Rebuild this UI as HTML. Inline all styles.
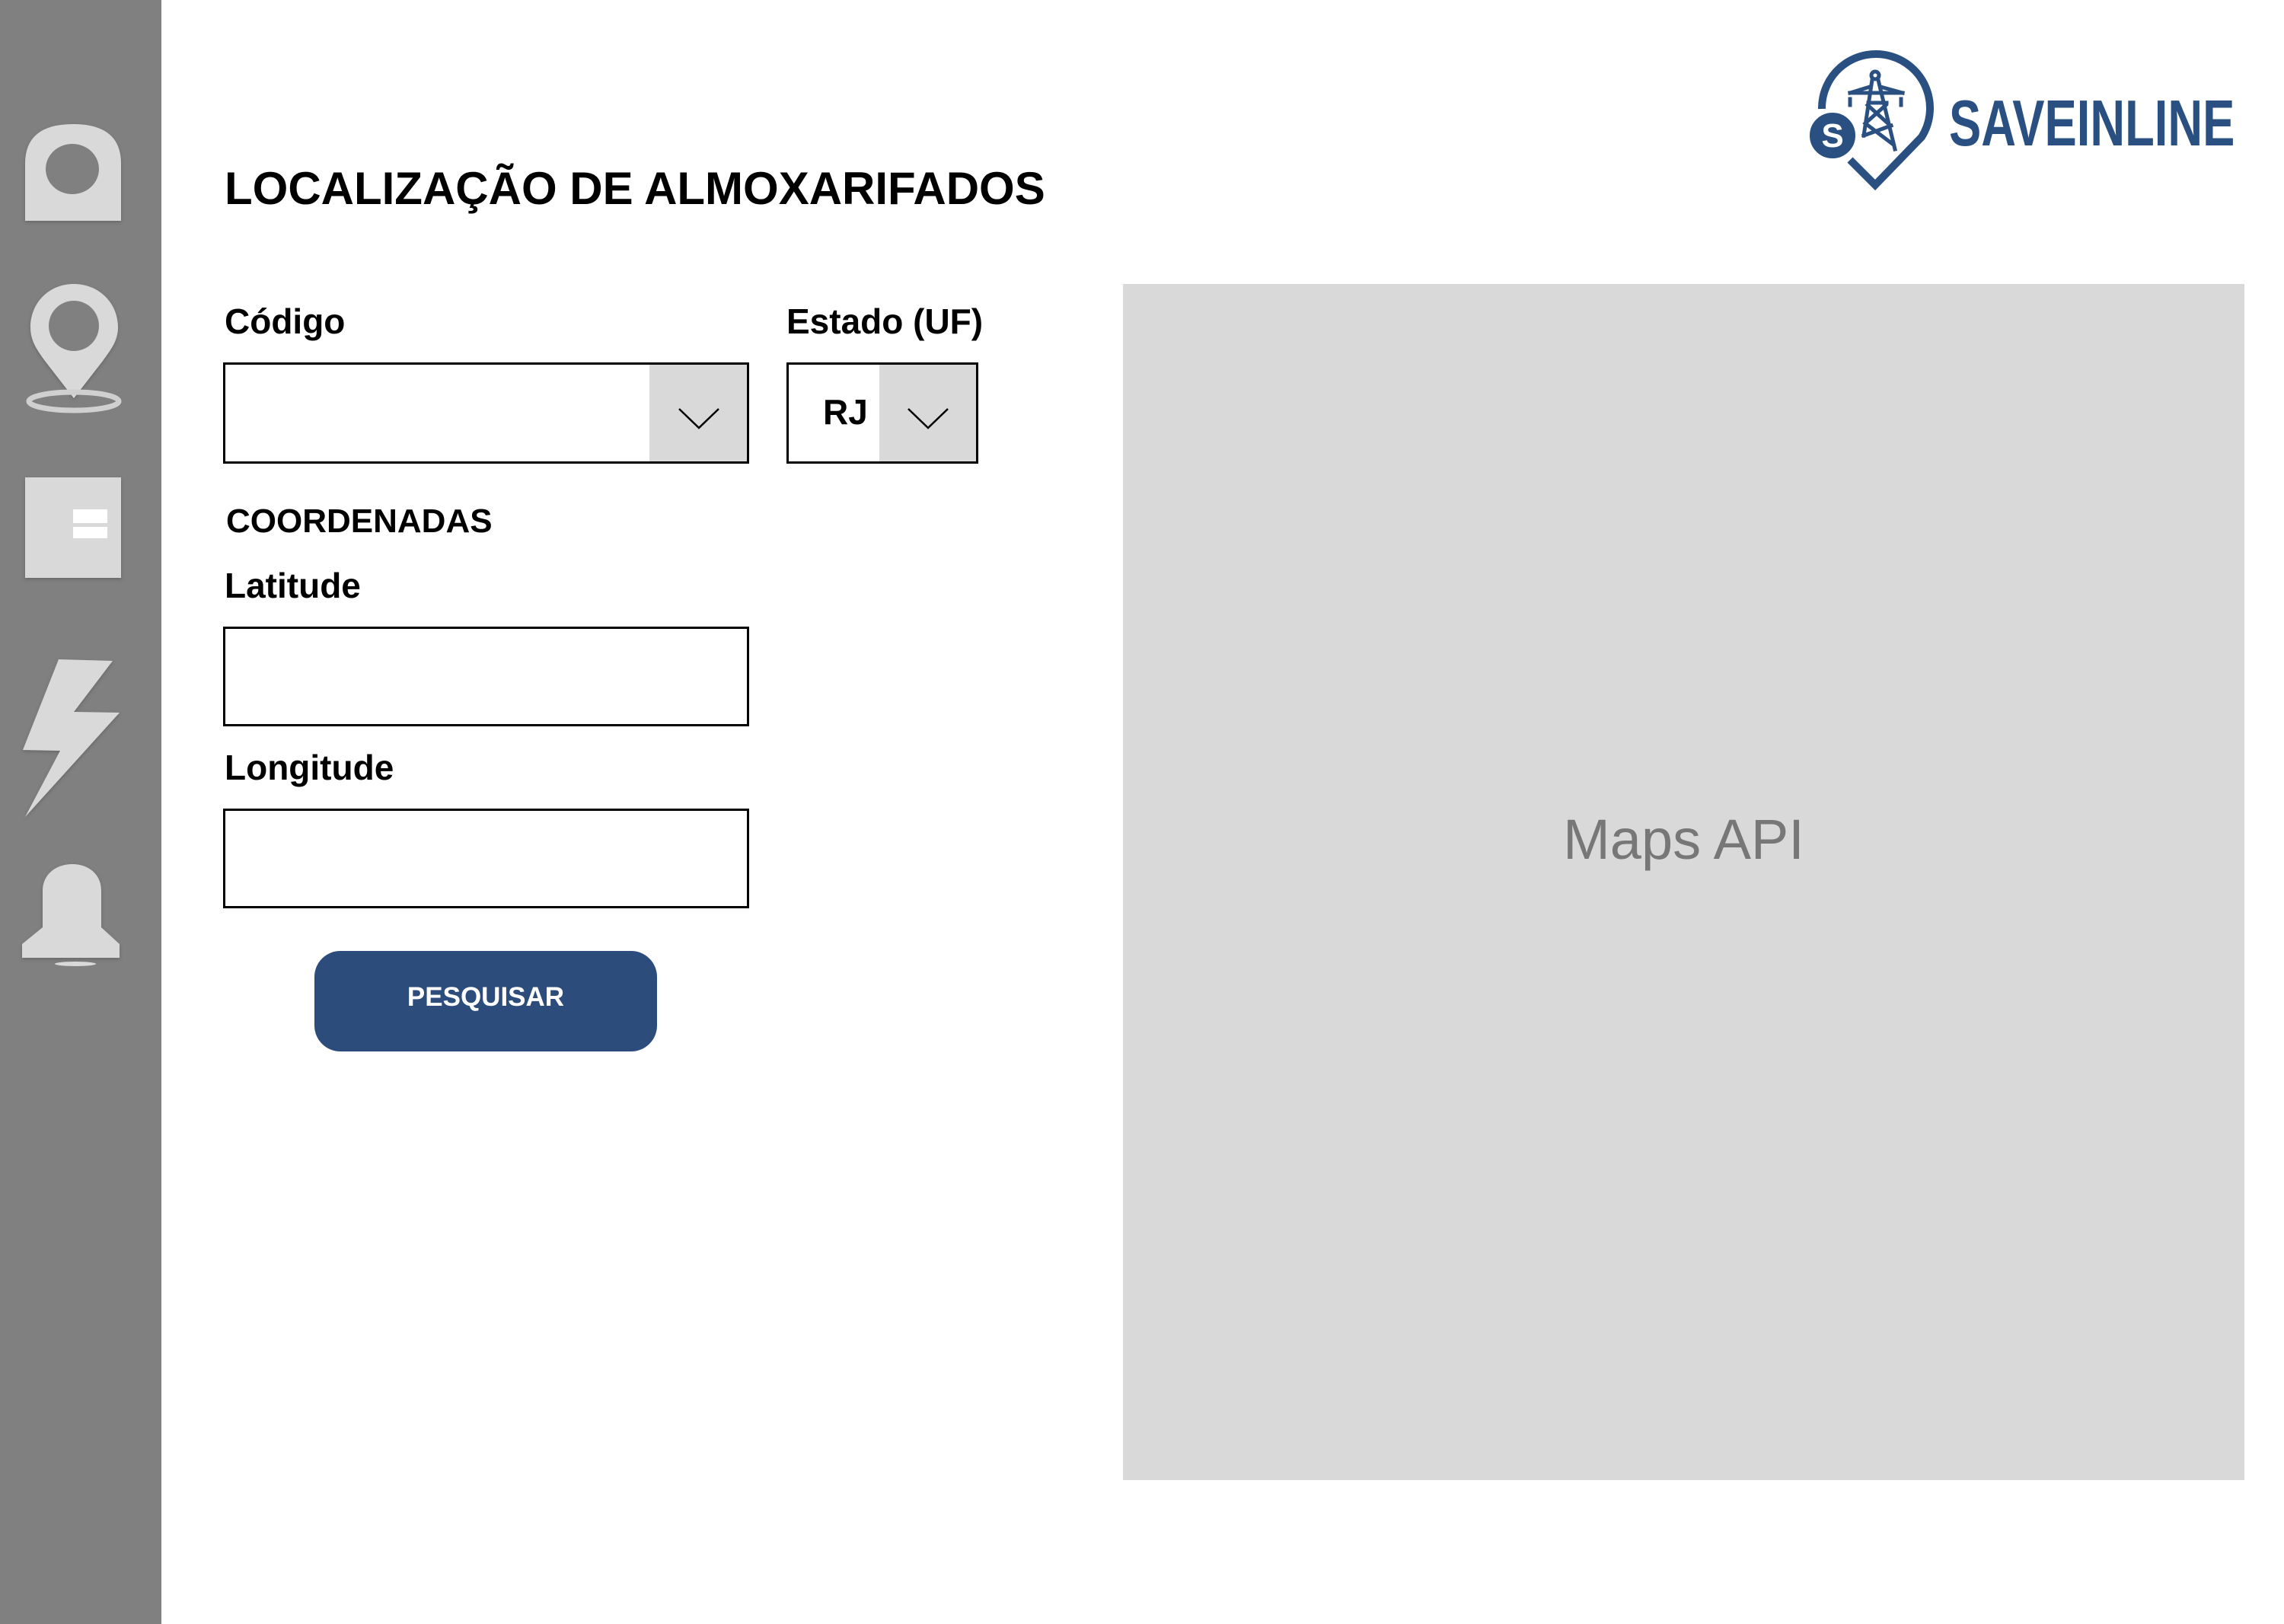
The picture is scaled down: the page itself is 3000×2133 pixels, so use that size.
<!DOCTYPE html>
<html><head><meta charset="utf-8"><style>
*{margin:0;padding:0;box-sizing:border-box}
html,body{width:3000px;height:2133px;background:#fff;overflow:hidden;font-family:"Liberation Sans",sans-serif;color:#000}
.abs{position:absolute}
.side{left:0;top:0;width:212px;height:2133px;background:#808080}
.lbl{font-weight:bold;font-size:46px;line-height:60px;white-space:nowrap}
.box{border:3px solid #000;background:#fff}
</style></head><body>
<div class="abs side"></div>
<svg class="abs" style="left:0;top:0" width="212" height="1300" viewBox="0 0 212 1300">
 <defs><filter id="sh"><feDropShadow dx="0" dy="2" stdDeviation="2" flood-color="#555" flood-opacity=".6"/></filter></defs>
 <g fill="#d9d9d9" filter="url(#sh)">
  <path d="M33 290 L33 215 Q33 163 96 163 Q159 163 159 215 L159 290 Z"/>
  <path d="M97 373 C130 373 155 398 155 430 C155 448 145 460 135 474 L97 523 L59 474 C49 460 40 448 40 430 C40 398 64 373 97 373 Z"/>
  <rect x="33" y="627" width="126" height="132"/>
  <path d="M77 866 L148 868 L97 935 L157 936 L33 1073 L79 986 L30 985 Z"/>
  <path d="M56 1218 L56 1170 C56 1148 74 1135 95 1135 C116 1135 133 1148 133 1170 L133 1218 L157 1240 L157 1258 L29 1258 L29 1240 Z"/>
 </g>
 <ellipse cx="95" cy="222" rx="35" ry="33" fill="#808080"/>
 <circle cx="97" cy="428" r="33" fill="#808080"/>
 <ellipse cx="97" cy="527" rx="59" ry="12" fill="none" stroke="#d0d0d0" stroke-width="7"/>
 <rect x="96" y="669" width="45" height="18" fill="#fff"/>
 <rect x="96" y="692" width="45" height="15" fill="#fff"/>
 <ellipse cx="99" cy="1266" rx="27" ry="3" fill="#d9d9d9"/>
</svg>

<div class="abs" style="left:295px;top:212px;font-weight:bold;font-size:60px;line-height:72px;white-space:nowrap">LOCALIZAÇÃO DE ALMOXARIFADOS</div>

<!-- logo -->
<svg class="abs" style="left:2360px;top:50px" width="200" height="220" viewBox="2360 50 200 220">
 <path d="M2393 143 A71 71 0 1 1 2524 180 L2463 243 L2430 210" fill="none" stroke="#2a5082" stroke-width="10" stroke-linejoin="miter"/>
 <g stroke="#2a5082" stroke-width="5" fill="none" stroke-linecap="square">
  <circle cx="2463" cy="99" r="5"/>
  <path d="M2459 105 L2448 178 M2467 105 L2489 196 M2430 122 L2499 122 M2456 114 L2430 122 M2470 114 L2499 122 M2430 130 L2430 138 M2497 130 L2497 138 M2454 135 L2478 135 M2453 138 L2483 165 M2477 138 L2450 162 M2450 162 L2487 190 M2484 165 L2448 178"/>
 </g>
 <circle cx="2407" cy="178" r="32" fill="#2a5082" stroke="#fff" stroke-width="4"/>
 <text x="2407" y="193" text-anchor="middle" font-family="Liberation Sans" font-weight="bold" font-size="44" fill="#fff">S</text>
</svg>
<div class="abs" style="left:2560px;top:116px;font-weight:bold;font-size:85px;line-height:94px;color:#2a5082;transform:scaleX(0.745);transform-origin:0 0;white-space:nowrap">SAVEINLINE</div>

<!-- form -->
<div class="abs lbl" style="left:295px;top:392px">Código</div>
<div class="abs lbl" style="left:1033px;top:392px">Estado (UF)</div>
<div class="abs box" style="left:293px;top:476px;width:691px;height:133px"></div>
<div class="abs" style="left:853px;top:479px;width:128px;height:127px;background:#d9d9d9"></div>
<svg class="abs" style="left:890px;top:535px" width="56" height="30"><path d="M2 2 L28 27 L54 2" fill="none" stroke="#000" stroke-width="2.5"/></svg>
<div class="abs box" style="left:1033px;top:476px;width:252px;height:133px"></div>
<div class="abs" style="left:1155px;top:479px;width:127px;height:127px;background:#d9d9d9"></div>
<svg class="abs" style="left:1191px;top:535px" width="56" height="30"><path d="M2 2 L28 27 L54 2" fill="none" stroke="#000" stroke-width="2.5"/></svg>
<div class="abs lbl" style="left:1081px;top:511px">RJ</div>

<div class="abs lbl" style="left:297px;top:655px;font-size:44px">COORDENADAS</div>
<div class="abs lbl" style="left:295px;top:739px">Latitude</div>
<div class="abs box" style="left:293px;top:823px;width:691px;height:131px"></div>
<div class="abs lbl" style="left:295px;top:978px">Longitude</div>
<div class="abs box" style="left:293px;top:1062px;width:691px;height:131px"></div>

<div class="abs" style="left:413px;top:1249px;width:450px;height:132px;background:#2c4c7c;border-radius:34px;color:#fff;font-weight:bold;font-size:35px;text-align:center;line-height:122px">PESQUISAR</div>

<!-- map -->
<div class="abs" style="left:1475px;top:373px;width:1473px;height:1571px;background:#d9d9d9"></div>
<div class="abs" style="left:1475px;top:1058px;width:1473px;text-align:center;font-size:74px;line-height:90px;color:#777">Maps API</div>
</body></html>
